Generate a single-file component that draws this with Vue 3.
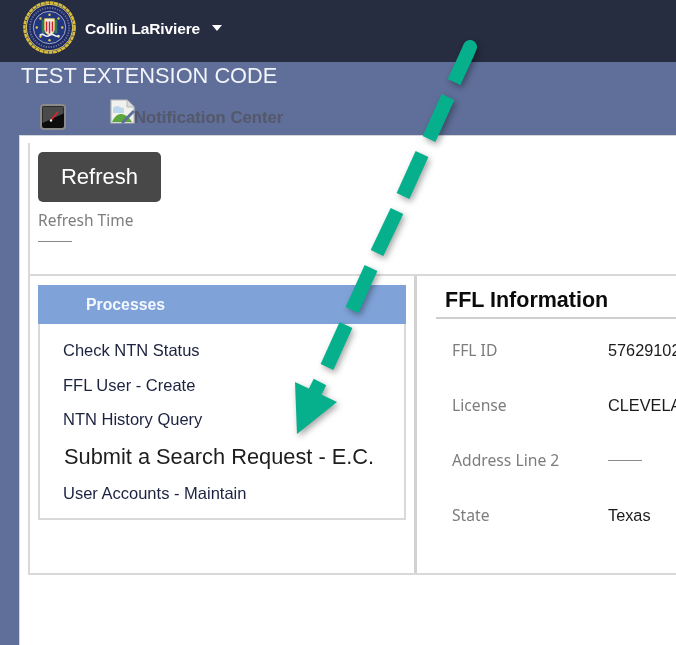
<script setup>
const processes = [
  { label: 'Check NTN Status' },
  { label: 'FFL User - Create' },
  { label: 'NTN History Query' },
  { label: 'Submit a Search Request - E.C.', big: true },
  { label: 'User Accounts - Maintain' }
]
const fields = [
  { label: 'FFL ID', value: '57629102' },
  { label: 'License', value: 'CLEVELAND' },
  { label: 'Address Line 2', value: '', dash: true },
  { label: 'State', value: 'Texas' }
]
const stars = [0, 45, 90, 135, 180, 225, 270, 315]
const dashes = [
  [448, 97, 429, 139],
  [422, 154, 403, 196],
  [397, 211, 377, 253],
  [371, 268, 352, 310],
  [346, 325, 327, 367]
]
</script>

<template>
  <div class="page">
    <header class="topbar">
      <svg class="seal" viewBox="0 0 54 54" aria-hidden="true">
        <circle cx="27" cy="27" r="25.5" fill="#1d2a63" stroke="#d9bd3a" stroke-width="2.6" stroke-dasharray="4 .6" />
        <circle cx="27" cy="27" r="23.5" fill="none" stroke="#e8d35a" stroke-width="1" />
        <circle cx="27" cy="27" r="16.5" fill="#22357f" stroke="#c8cbd8" stroke-width=".8" />
        <circle cx="27" cy="27" r="20" fill="none" stroke="#aab0c8" stroke-width="2" stroke-dasharray="1.4 1.2" opacity=".5" />
        <g fill="#e6cf4c">
          <circle v-for="a in stars" :key="a" :cx="27 + 13 * Math.cos(a * Math.PI / 180)" :cy="27 + 13 * Math.sin(a * Math.PI / 180)" r="1.2" />
        </g>
        <path d="M19 19h3v14h-3zM32 19h3v14h-3z" fill="#2c7a5a" />
        <path d="M22 18h10v11q0 4-5 6q-5-2-5-6z" fill="#f3efe4" stroke="#e2c84a" stroke-width=".8" />
        <path d="M24 21v10M27 21v12M30 21v10" stroke="#c8203a" stroke-width="1.5" />
        <path d="M17 35q2.500-2 5 0t5 0t5 0t5 0" fill="none" stroke="#eef0f5" stroke-width="1.500" />
      </svg>
      <span class="user">Collin LaRiviere</span>
      <span class="caret"></span>
    </header>

    <section class="band">
      <h1 class="title">TEST EXTENSION CODE</h1>
      <div class="tools">
        <span class="gauge">
          <svg viewBox="0 0 26 26" aria-hidden="true">
            <rect x="1" y="1" width="24" height="24" rx="3" fill="#0c0c0c" stroke="#8b8b8b" stroke-width="2" />
            <path d="M2.500 2.500h21v7L2.500 19z" fill="#4a4a4a" />
            <path d="M11 16L18 8" stroke="#e0262b" stroke-width="1.600" />
            <circle cx="11" cy="16.500" r="1.200" fill="#eee" />
          </svg>
        </span>
        <span class="notice">
          <svg class="broken" viewBox="0 0 25 25" aria-hidden="true">
            <path d="M1 1h16l7 7v16H1z" fill="#f1f1ee" stroke="#b9b9b9" stroke-width="1.200" />
            <path d="M17 1v7h7" fill="#dcdcdc" stroke="#b9b9b9" />
            <path d="M3 9q3-3 6-1.500t5 1.500v5H3z" fill="#bcd6ee" />
            <path d="M2 23q4-9 10-8t10 8z" fill="#5aa83c" />
            <path d="M12 24L24 12" stroke="#5f6f99" stroke-width="3" />
          </svg>
          <span class="notice-text">Notification Center</span>
        </span>
      </div>
    </section>

    <main class="content">
      <div class="frame">
        <div class="refresh-area">
          <button class="refresh" type="button">Refresh</button>
          <div class="refresh-label">Refresh Time</div>
          <div class="refresh-dash"></div>
        </div>
        <div class="split">
          <div class="left">
            <div class="processes">
              <div class="processes-head">Processes</div>
              <ul class="process-list">
                <li v-for="p in processes" :key="p.label" :class="['process', { big: p.big }]">{{ p.label }}</li>
              </ul>
            </div>
          </div>
          <div class="right">
            <h2 class="info-title">FFL Information</h2>
            <dl class="fields">
              <div v-for="f in fields" :key="f.label" class="field">
                <dt>{{ f.label }}</dt>
                <dd>
                  <span v-if="f.dash" class="field-dash"></span>
                  <template v-else>{{ f.value }}</template>
                </dd>
              </div>
            </dl>
          </div>
        </div>
      </div>
    </main>

    <svg class="arrow" viewBox="0 0 676 645" aria-hidden="true">
      <g stroke="#06b08c" stroke-width="14" fill="none">
        <path d="M467 54L454 82" />
        <path d="M467 54L470 47" stroke-linecap="round" />
        <path v-for="(d, i) in dashes" :key="i" :d="`M${d[0]} ${d[1]}L${d[2]} ${d[3]}`" />
        <path d="M320 382L315 392" />
      </g>
      <path d="M295 382L337 402L297 434z" fill="#06b08c" />
    </svg>
  </div>
</template>

<style>
html, body { margin: 0; padding: 0; overflow: hidden; }
</style>

<style scoped>
.page {
  position: relative;
  width: 676px;
  height: 645px;
  overflow: hidden;
  display: flex;
  flex-direction: column;
  background: #5f6f99;
  font-family: "Liberation Sans", Arial, sans-serif;
  filter: blur(0.35px);
}
.topbar {
  height: 62px;
  flex: none;
  box-sizing: border-box;
  background: #262d40;
  display: flex;
  align-items: center;
  padding-left: 23px;
}
.seal { width: 53px; height: 53px; margin-right: 9px; margin-top: -8px; }
.user {
  color: #fff;
  font-size: 15.500px;
  font-weight: 700;
  letter-spacing: -0.130px;
  margin-top: -5px;
}
.caret {
  width: 0;
  height: 0;
  margin: -6px 0 0 12px;
  border-left: 5.500px solid transparent;
  border-right: 5.500px solid transparent;
  border-top: 6px solid #fff;
}
.band { height: 73px; flex: none; padding-left: 21px; box-sizing: border-box; }
.title {
  margin: 0;
  height: 27px;
  line-height: 27px;
  color: #f2f4fa;
  font-size: 21.800px;
  font-weight: 400;
}
.tools { display: flex; align-items: flex-start; padding-top: 10px; padding-left: 19px; }
.gauge { width: 26px; height: 26px; margin-top: 5px; }
.gauge svg { display: block; width: 26px; height: 26px; }
.notice { display: flex; margin-left: 44px; }
.broken { width: 25px; height: 25px; flex: none; }
.notice-text {
  color: #54586a;
  font-size: 16.700px;
  font-weight: 700;
  line-height: 20px;
  margin-top: 9px;
  margin-left: -1px;
}
.content {
  flex: 1;
  margin-left: 19px;
  background: #fff;
  border-top: 1px solid #d4d6dc;
  border-left: 1px solid #d4d6dc;
  padding: 7px 0 0 9px;
  min-height: 0;
}
.frame { margin-left: -1px; border-left: 2px solid #d9d9d9; height: 432px; box-sizing: border-box; border-bottom: 2px solid #d9d9d9; display: flex; flex-direction: column; }
.refresh-area { height: 131px; flex: none; box-sizing: border-box; padding: 9px 0 0 8px; }
.refresh {
  display: block;
  width: 123px;
  height: 50px;
  border: 0;
  border-radius: 5px;
  background: #484848;
  color: #fff;
  font-family: inherit;
  font-size: 22px;
  padding: 0 0 1px;
}
.refresh-label {
  margin-top: 8px;
  color: #7d7d7d;
  font-family: "Noto Sans", sans-serif;
  font-size: 15.500px;
  line-height: 20px;
}
.refresh-dash { width: 34px; height: 1px; margin-top: 11px; background: #8a8a8a; }
.split { flex: 1; min-height: 0; display: flex; border-top: 2px solid #d9d9d9; }
.left { width: 387px; flex: none; box-sizing: border-box; padding: 9px 0 0 8px; border-right: 3px solid #d2d2d2; }
.processes { width: 368px; height: 235px; box-sizing: border-box; border: 2px solid #d9d9d9; border-top: 0; }
.processes-head {
  height: 39px;
  line-height: 39px;
  background: #7fa3d9;
  color: #f5f8ff;
  font-size: 15.800px;
  font-weight: 700;
  padding-left: 48px;
  margin: 0 -2px;
}
.process-list { list-style: none; margin: 0; padding: 9px 0 0 23px; }
.process { height: 34.500px; line-height: 34px; font-size: 16.500px; color: #1c2240; white-space: nowrap; }
.process.big { height: 39.500px; line-height: 39px; font-size: 21.800px; color: #1d1d1d; padding-left: 1px; }
.right { flex: 1; min-width: 0; padding: 9px 0 0 19px; overflow: hidden; }
.info-title {
  margin: 0;
  height: 32px;
  line-height: 30px;
  font-size: 21.500px;
  font-weight: 700;
  color: #0b0b0b;
  padding-left: 9px;
  border-bottom: 2px solid #cfcfcf;
  white-space: nowrap;
}
.fields { margin: 0; padding: 4px 0 0 16px; }
.field { display: flex; height: 55px; align-items: center; white-space: nowrap; }
.field dt { width: 156px; flex: none; font-family: "Noto Sans", sans-serif; font-size: 15.700px; color: #7d7d7d; margin-top: -2px; }
.field dd { margin: 0; font-size: 16.300px; color: #1b1b1b; }
.field-dash { display: block; width: 34px; height: 1px; background: #8a8a8a; }
.arrow {
  position: absolute;
  left: 0;
  top: 0;
  width: 676px;
  height: 645px;
  pointer-events: none;
  filter: drop-shadow(2px 3px 3px rgba(0, 0, 0, 0.35));
}
</style>
